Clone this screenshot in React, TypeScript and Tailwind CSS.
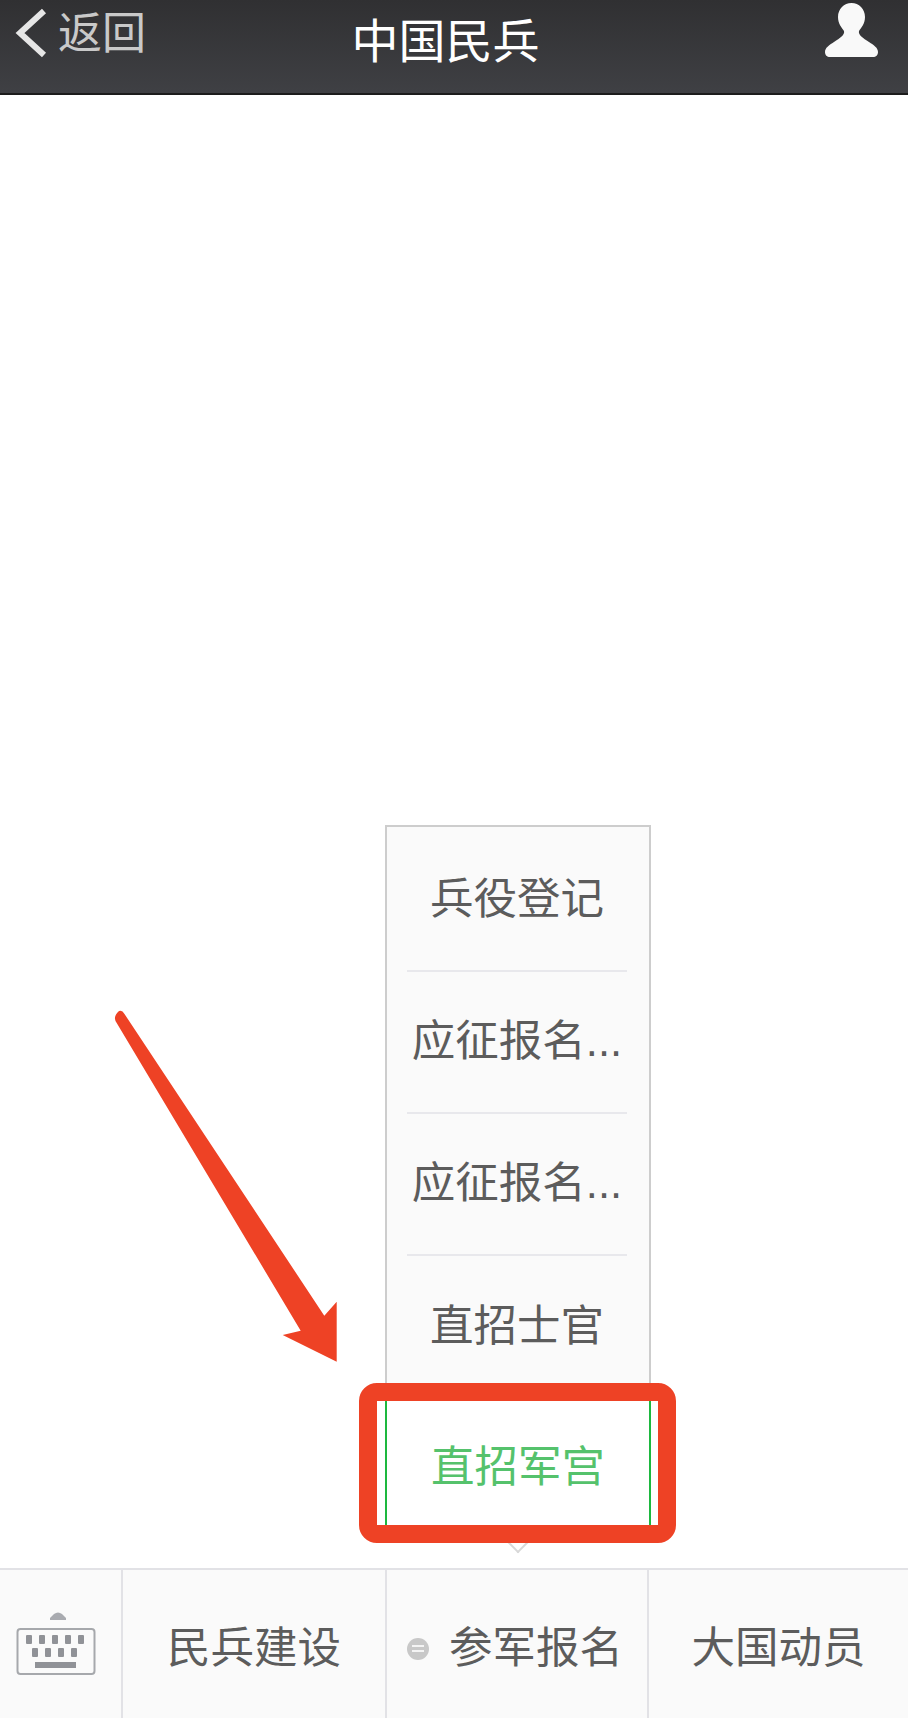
import React from "react";

const FONT = "font-['Liberation_Sans','Noto_Sans_CJK_SC',sans-serif]";

const menuItems = ["兵役登记", "应征报名...", "应征报名...", "直招士官"];

function KeyboardIcon() {
  const topRow = [26, 39, 52, 65, 78];
  const midRow = [32, 45, 58, 71];
  return (
    <svg width="110" height="68" viewBox="0 0 110 68">
      <path d="M50 10 L54 6 Q58 3 62 6 L66 10 L66 12 L50 12 Z" fill="#a9abb0" />
      <rect x="17.500" y="21" width="77" height="45" rx="3" fill="none" stroke="#a6a8ac" strokeWidth="2" />
      {topRow.map((x) => (
        <rect key={x} x={x} y="27" width="6" height="9" rx="1" fill="#909297" />
      ))}
      {midRow.map((x) => (
        <rect key={x} x={x} y="40" width="6" height="9" rx="1" fill="#909297" />
      ))}
      <rect x="35" y="54" width="41" height="6" fill="#909297" />
    </svg>
  );
}

export default function App() {
  return (
    <div className={`${FONT} relative flex h-[1718px] w-[908px] flex-col overflow-hidden bg-white`}>
      {/* top bar */}
      <header className="grid h-[95px] shrink-0 grid-cols-[1fr_auto_1fr] border-b-2 border-[#1c1c1c] bg-gradient-to-b from-[#303032] to-[#3f4044] pr-[30px] pl-[13px]">
        <div className="flex items-start">
          <svg width="36" height="52" viewBox="0 0 36 52" className="mt-[7px]">
            <path d="M31 4 L7 26 L31 48" fill="none" stroke="#e6e6e6" strokeWidth="6" />
          </svg>
          <span className="mt-[6px] ml-[9px] text-[44px] leading-[56px] text-[#c9c9c9]">返回</span>
        </div>
        <h1 className="mt-[12px] text-[47px] leading-[60px] text-white">中国民兵</h1>
        <div className="flex justify-end">
          <svg width="53" height="54" viewBox="0 0 53 54" className="mt-[3px]">
            <path
              d="M26.500 0 C34 0 40 6 40 14 C40 21 36 25 34 28 C33 32 38 35 44 39 C49 42 53 45 53 49 C53 52 51 54 48 54 L5 54 C2 54 0 52 0 49 C0 45 4 42 9 39 C15 35 20 32 19 28 C17 25 13 21 13 14 C13 6 19 0 26.500 0 Z"
              fill="#f9f9f9"
            />
          </svg>
        </div>
      </header>

      <main className="flex-1 bg-white" />

      {/* bottom menu */}
      <footer className="flex h-[150px] shrink-0 border-t-2 border-[#e2e2e6] bg-[#fafafa] text-[43.500px] text-[#5c5c5c]">
        <div className="flex w-[121px] shrink-0 items-start pt-[38px]">
          <KeyboardIcon />
        </div>
        <div className="flex w-[264px] shrink-0 items-center justify-center border-l-2 border-[#e2e2e6] pt-[9px]">
          民兵建设
        </div>
        <div className="flex w-[262px] shrink-0 items-center gap-[20px] border-l-2 border-[#e2e2e6] pt-[9px] pl-[20px]">
          <span className="flex h-[22px] w-[22px] flex-col items-center justify-center gap-[3px] rounded-full bg-[#c8c8c8]">
            <span className="h-[2px] w-[12px] bg-[#f4f4f4]" />
            <span className="h-[2px] w-[12px] bg-[#f4f4f4]" />
          </span>
          参军报名
        </div>
        <div className="flex flex-1 items-center justify-center border-l-2 border-[#e2e2e6] pt-[9px]">
          大国动员
        </div>
      </footer>

      {/* popup menu above the bottom bar */}
      <div className="absolute top-[825px] left-[385px] flex w-[266px] flex-col border-2 border-b-0 border-[#cdcdcd] bg-[#fafafa] pt-[3px] text-[43.500px] text-[#5c5c5c]">
        {menuItems.map((label, i) => (
          <div key={i} className="pr-[22px] pl-[20px]">
            <div
              className={`flex h-[142px] items-center justify-center whitespace-nowrap ${
                i < 3 ? "border-b-2 border-[#e8e8ec]" : ""
              }`}
            >
              {label}
            </div>
          </div>
        ))}
      </div>
      <div className="absolute top-[1397px] left-[385px] flex h-[141px] w-[266px] items-center justify-center border-x-2 border-[#1db83f] bg-white text-[43.500px] text-[#55c26c]">
        直招军宫
      </div>
      <div className="absolute top-[1534px] left-[510px] h-[16px] w-[16px] rotate-45 border-r-2 border-b-2 border-[#d8d8d8] bg-white" />

      {/* red annotation */}
      <div className="absolute top-[1383px] left-[359px] h-[160px] w-[317px] rounded-[18px] border-[18px] border-[#ee4225]" />
      <svg className="absolute top-[1010px] left-[110px]" width="232" height="356" viewBox="110 1010 232 356">
        <path
          d="M115 1019 Q114.500 1015 119 1011 Q122 1009.500 124.500 1014 L324.300 1315.700 L336.700 1301.700 L336.700 1361.700 L282.700 1335 L300.700 1330.700 L115.500 1021 Z"
          fill="#ee4225"
        />
      </svg>
    </div>
  );
}
